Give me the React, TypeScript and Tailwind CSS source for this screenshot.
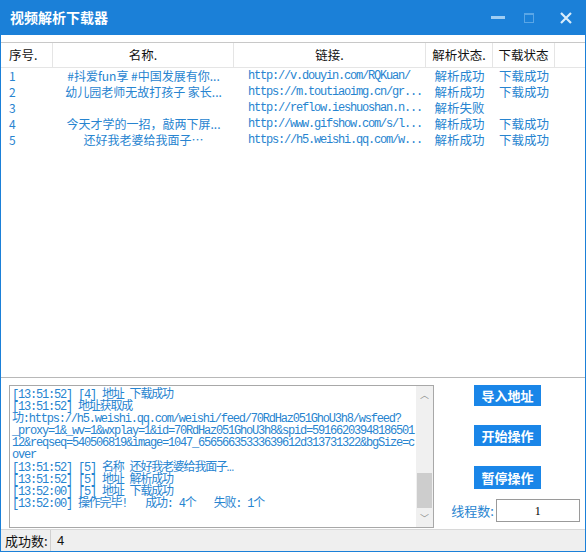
import React from 'react';

const cjk = "font-['SimSun','Noto_Sans_CJK_SC',sans-serif]";
const mono = "font-['Liberation_Mono','Noto_Sans_CJK_SC',monospace]";

const rows = [
  { no: '1', name: '#抖爱fun享 #中国发展有你...', url: 'http://v.douyin.com/RQKuan/', parse: '解析成功', down: '下载成功' },
  { no: '2', name: '幼儿园老师无故打孩子 家长...', url: 'https://m.toutiaoimg.cn/gr...', parse: '解析成功', down: '下载成功' },
  { no: '3', name: '', url: 'http://reflow.ieshuoshan.n...', parse: '解析失败', down: '' },
  { no: '4', name: '今天才学的一招，敲两下屏...', url: 'http://www.gifshow.com/s/l...', parse: '解析成功', down: '下载成功' },
  { no: '5', name: '还好我老婆给我面子…', url: 'https://h5.weishi.qq.com/w...', parse: '解析成功', down: '下载成功' },
];

const logLines = [
  '[13:51:52] [4] 地址 下载成功',
  '[13:51:52] 地址获取成',
  '功:https://h5.weishi.qq.com/weishi/feed/70RdHaz051GhoU3h8/wsfeed?',
  '_proxy=1&_wv=1&wxplay=1&id=70RdHaz051GhoU3h8&spid=59166203948186501',
  '12&reqseq=540506819&image=1047_65656635333639612d313731322&bgSize=c',
  'over',
  '[13:51:52] [5] 名称 还好我老婆给我面子…',
  '[13:51:52] [5] 地址 解析成功',
  '[13:52:00] [5] 地址 下载成功',
  '[13:52:00] 操作完毕!   成功: 4个   失败: 1个',
];

function Header() {
  const cols = [
    { w: 'w-[52px]', t: '序号.', left: true },
    { w: 'w-[181px]', t: '名称.' },
    { w: 'w-[192px]', t: '链接.' },
    { w: 'w-[67px]', t: '解析状态.' },
    { w: 'w-[62px]', t: '下载状态' },
  ];
  return (
    <div className="flex h-[25px] border-b border-[#e5e5e5] text-[12.5px] text-[#111]">
      {cols.map((c, i) => (
        <div
          key={i}
          className={`${c.w} flex items-center border-r border-[#e5e5e5] whitespace-nowrap ${c.left ? 'pl-[8px]' : 'justify-center'}`}
        >
          {c.t}
        </div>
      ))}
      <div className="flex-1" />
    </div>
  );
}

function Btn({ label, tall }: { label: string; tall?: boolean }) {
  return (
    <div
      className={`${tall ? 'h-[23px]' : 'h-[21px]'} w-[67px] bg-[#1a86e8] text-white text-[13px] font-bold flex items-center justify-center`}
    >
      {label}
    </div>
  );
}

export default function App() {
  return (
    <div className={`w-[586px] h-[552px] flex flex-col bg-[#1b80d8] ${cjk}`}>
      {/* title bar */}
      <div className="h-[35px] flex items-center pl-[10px] pr-[14px] text-white">
        <div className="text-[14px] font-bold flex-1">视频解析下载器</div>
        <div className="w-[14px] h-[3px] bg-[#9fcdf3] mr-[19px]" />
        <div className="w-[10px] h-[10px] border border-[#5aa6e6] border-t-2 mr-[26px]" />
        <svg width="12" height="12" viewBox="0 0 12 12">
          <path d="M1 1 L11 11 M11 1 L1 11" stroke="#d8ecfb" strokeWidth="2.2" />
        </svg>
      </div>

      <div className="flex-1 mx-[1px] mb-[1px] bg-white flex flex-col">
        {/* table */}
        <div className="h-[343px] flex flex-col border-b border-[#b8b8b8]">
          <div className="h-[8px] border-b border-[#c8c8c8]" />
          <Header />
          <div className="text-[12px] text-[#2784d0]">
            {rows.map((r) => (
              <div key={r.no} className="flex h-[16px] items-center leading-[14px]">
                <div className="w-[52px] pl-[8px]">{r.no}</div>
                <div className="w-[181px] text-center whitespace-nowrap">{r.name}</div>
                <div className={`w-[192px] pl-[14px] whitespace-nowrap ${mono} tracking-[-1.2px]`}>{r.url}</div>
                <div className="w-[67px] text-center text-[12.5px]">{r.parse}</div>
                <div className="w-[62px] text-center text-[12.5px]">{r.down}</div>
              </div>
            ))}
          </div>
        </div>

        {/* bottom area */}
        <div className="flex-1 flex pt-[7px]">
          <div className="ml-[8px] w-[425px] h-[143px] border border-[#a8a8a8] flex">
            <div className={`flex-1 pl-[2px] pt-[3px] text-[12px] tracking-[-1.2px] leading-[12.1px] text-[#2784d0] ${mono} whitespace-pre overflow-hidden`}>
              {logLines.map((l, i) => (
                <div key={i}>{l}</div>
              ))}
            </div>
            <div className="w-[17px] bg-[#f0f0f0] flex flex-col items-center">
              <div className="h-[17px] text-[9px] text-[#8a8a8a] flex items-center">︿</div>
              <div className="flex-1 w-full flex flex-col">
                <div className="flex-1" />
                <div className="h-[35px] bg-[#cdcdcd] mx-[1px] mb-[2px]" />
              </div>
              <div className="h-[17px] text-[9px] text-[#8a8a8a] flex items-center">﹀</div>
            </div>
          </div>
          <div className="flex-1 flex flex-col items-center">
            <div className="ml-[-4px] flex flex-col gap-[19px] items-center">
              <Btn label="导入地址" />
              <Btn label="开始操作" />
              <div className="pt-[1px]">
                <Btn label="暂停操作" tall />
              </div>
            </div>
            <div className="flex items-center mt-[10px] ml-[12px]">
              <span className="text-[13px] text-[#2784d0] mr-[2px]">线程数:</span>
              <div className="w-[84px] h-[23px] border border-[#9a9a9a] flex items-center justify-center text-[12px] text-black font-['Liberation_Serif',serif]">
                1
              </div>
            </div>
          </div>
        </div>

        {/* status bar */}
        <div className="h-[22px] bg-[#efefef] border-t border-[#d8d8d8] flex items-center text-[13px] text-[#111]">
          <div className="w-[50px] pl-[4px] border-r border-[#d0d0d0] h-full flex items-center">成功数:</div>
          <div className="pl-[6px] font-['Liberation_Sans',sans-serif]">4</div>
        </div>
      </div>
    </div>
  );
}
